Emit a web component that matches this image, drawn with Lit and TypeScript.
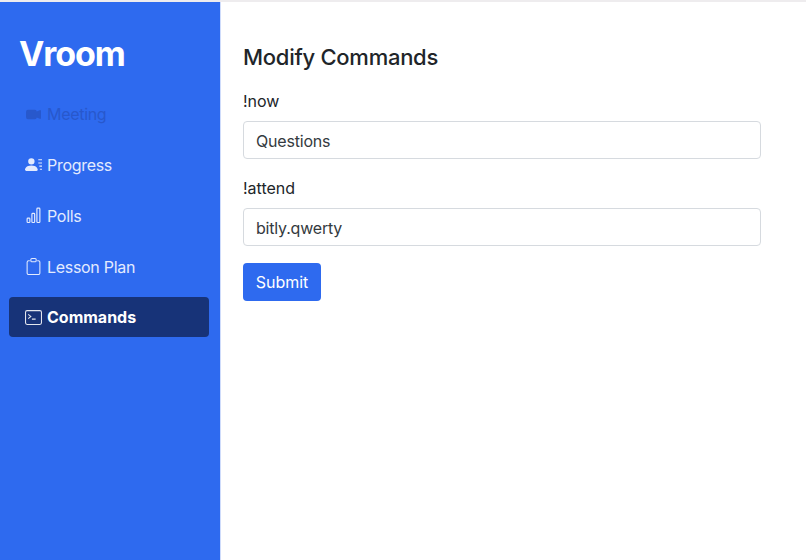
import { LitElement, html, css, svg } from "lit";
import { customElement } from "lit/decorators.js";

const icons: Record<string, unknown> = {
  video: svg`<path fill="currentColor" transform="translate(1 1) scale(.875)" d="M0 5a2 2 0 0 1 2-2h7.500a2 2 0 0 1 2 1.900l3.300-1.600c.5-.3 1.200.1 1.200.7v8c0 .6-.7 1-1.200.7l-3.300-1.600a2 2 0 0 1-2 1.900H2a2 2 0 0 1-2-2V5z"/>`,
  person: svg`<path fill="currentColor" d="M1 14s-1 0-1-1 1-4 6-4 6 3 6 4-1 1-1 1H1zM6 8a3 3 0 1 0 0-6 3 3 0 0 0 0 6z"/><path fill="currentColor" d="M12.500 3h3.500v1h-3.500zM12.500 6h3.500v1h-3.500zM13.500 9h2.500v1h-2.500zM14 12h2v1h-2z"/>`,
  bars: svg`<path fill="none" stroke="currentColor" stroke-width="1.100" d="M2.800 10.500h1a.8.8 0 0 1 .8.8v2.500a.8.8 0 0 1-.8.8h-1a.8.8 0 0 1-.8-.8v-2.500a.8.8 0 0 1 .8-.8zM7.300 6h1a.8.8 0 0 1 .8.8v7a.8.8 0 0 1-.8.8h-1a.8.8 0 0 1-.8-.8v-7a.8.8 0 0 1 .8-.8zM12 1h1.200a.8.8 0 0 1 .8.8v12a.8.8 0 0 1-.8.8H12a.8.8 0 0 1-.8-.8v-12A.8.8 0 0 1 12 1z"/>`,
  clip: svg`<path fill="none" stroke="currentColor" stroke-width="1" d="M4.500 2.500H3.500a1.500 1.500 0 0 0-1.500 1.500v10a1.500 1.500 0 0 0 1.500 1.500h9a1.500 1.500 0 0 0 1.500-1.500V4a1.500 1.500 0 0 0-1.500-1.500h-1"/><rect x="5.500" y="0.500" width="5" height="3" rx="1" fill="none" stroke="currentColor" stroke-width="1"/>`,
  term: svg`<g opacity=".88"><rect x="0.500" y="1.500" width="15" height="13" rx="1.500" fill="none" stroke="currentColor" stroke-width="1"/><path fill="none" stroke="currentColor" stroke-width="1" d="M3 5l2.500 2L3 9M6.500 9.500h3.500"/></g>`,
};

const nav = [
  { label: "Meeting", icon: "video", cls: "disabled" },
  { label: "Progress", icon: "person", cls: "" },
  { label: "Polls", icon: "bars", cls: "" },
  { label: "Lesson Plan", icon: "clip", cls: "" },
  { label: "Commands", icon: "term", cls: "active" },
];

@customElement("app-root")
export class AppRoot extends LitElement {
  static styles = css`
    :host {
      display: block;
      width: 806px;
      height: 560px;
      overflow: hidden;
      background: #fff;
      color: #212529;
      font-family: Inter, "Liberation Sans", sans-serif;
    }
    .frame {
      height: 100%;
      box-sizing: border-box;
      border-top: 2px solid #eeecee;
      display: flex;
    }
    .side {
      flex: 0 0 221px;
      box-sizing: border-box;
      border-right: 1px solid #cfdcfb;
      background: #2e6aef;
      color: #fff;
      padding: 30px 11px 0 9px;
    }
    .brand {
      margin: 0 0 0 10px;
      font-size: 34px;
      line-height: 44px;
      font-weight: 700;
      letter-spacing: -1.1px;
    }
    .nav {
      display: flex;
      flex-direction: column;
      gap: 10.85px;
      margin-top: 18px;
    }
    .item {
      height: 40px;
      display: flex;
      align-items: center;
      gap: 5px;
      padding-left: 16px;
      border-radius: 4px;
      font-size: 16px;
      letter-spacing: -0.3px;
      color: #e3ebfe;
    }
    .item svg {
      width: 17px;
      height: 17px;
      flex: none;
    }
    .item.disabled {
      color: #2858cc;
    }
    .item.active {
      background: #173378;
      color: #fff;
      font-weight: 700;
      letter-spacing: 0;
    }
    .main {
      flex: 1;
      padding: 41px 45px 0 22px;
    }
    h2 {
      margin: 0 0 18px;
      font-size: 22px;
      line-height: 28px;
      font-weight: 500;
      letter-spacing: -0.27px;
    }
    label {
      display: block;
      font-size: 16px;
      line-height: 24px;
      margin-bottom: 8px;
    }
    .field {
      margin-bottom: 17px;
    }
    .input {
      box-sizing: border-box;
      height: 38px;
      border: 1px solid #d6dadf;
      border-radius: 4px;
      padding: 1px 12px 0;
      display: flex;
      align-items: center;
      font-size: 16px;
      letter-spacing: -0.2px;
      color: #343a40;
    }
    .btn {
      display: block;
      width: 78px;
      height: 38px;
      border: none;
      border-radius: 4px;
      background: #2e6aef;
      color: #fff;
      font: inherit;
      font-size: 16px;
      padding: 0;
    }
  `;

  render() {
    return html`
      <div class="frame">
        <aside class="side">
          <h1 class="brand">Vroom</h1>
          <nav class="nav">
            ${nav.map(
              (n) => html`<div class="item ${n.cls}">
                <svg viewBox="0 0 16 16">${icons[n.icon]}</svg>
                <span>${n.label}</span>
              </div>`
            )}
          </nav>
        </aside>
        <main class="main">
          <h2>Modify Commands</h2>
          <div class="field">
            <label>!now</label>
            <div class="input">Questions</div>
          </div>
          <div class="field">
            <label>!attend</label>
            <div class="input">bitly.qwerty</div>
          </div>
          <button class="btn">Submit</button>
        </main>
      </div>
    `;
  }
}
